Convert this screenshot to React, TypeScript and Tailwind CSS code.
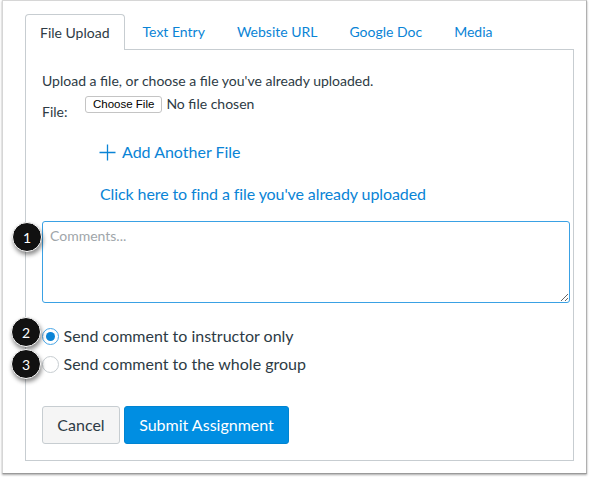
import React from "react";

const Badge = ({ n, className }: { n: string; className: string }) => (
  <div
    className={`absolute w-[30px] h-[30px] rounded-full bg-[#111] border border-white flex items-center justify-center text-white text-[14px] shadow-[1px_3px_4px_rgba(0,0,0,0.45)] ${className}`}
  >
    {n}
  </div>
);

export default function App() {
  const tabs = ["Text Entry", "Website URL", "Google Doc", "Media"];
  return (
    <div className="w-[589px] h-[477px] bg-white relative font-['Lato','Noto_Sans',sans-serif] text-[#2d3b45]">
      <div className="ml-[2px] w-[585px] h-[474px] bg-white border border-[#d6d6d6] border-b-[#9a9a9a] border-r-[#b0b0b0] shadow-[0_1px_2px_rgba(0,0,0,0.35)] pl-[22px] pr-[12px] pt-[12px]">
        <div className="flex items-end h-[36px]">
          <div className="h-[36px] px-[14px] border border-b-0 border-[#c7cdd1] rounded-t-[4px] bg-white relative z-10 flex items-center text-[14px] text-[#2d3b45] -mb-px pb-[1px]">
            File Upload
          </div>
          <div className="flex items-center h-[36px] text-[14px] text-[#0a84d6] pl-[18px] gap-[32px]">
            {tabs.map((t) => (
              <span key={t}>{t}</span>
            ))}
          </div>
        </div>
        <div className="h-[412px] border border-[#c7cdd1] pl-[16px] pr-[2px] pt-[21px]">
          <div className="text-[14px] leading-[20px]">
            Upload a file, or choose a file you've already uploaded.
          </div>
          <div className="flex items-start mt-[3px] h-[30px]">
            <span className="text-[14px] leading-[20px] mt-[8px] w-[43px]">File:</span>
            <div className="flex items-center">
              <span className="h-[17px] px-[7px] border border-[#c4c4c4] rounded-[3px] bg-white text-[11.5px] leading-[15px] text-black font-['Liberation_Sans',Arial,sans-serif] flex items-center">
                Choose File
              </span>
              <span className="ml-[4px] text-[14px] leading-[20px] text-[#2d3b45]">No file chosen</span>
            </div>
          </div>
          <div className="ml-[57px] mt-[16px] flex items-center text-[16px] leading-[24px] text-[#0a84d6]">
            <svg width="17" height="17" viewBox="0 0 17 17" className="mr-[6px]">
              <path d="M8.5 0.5v16M0.5 8.5h16" stroke="#0a84d6" strokeWidth="1.3" fill="none" />
            </svg>
            Add Another File
          </div>
          <div className="ml-[58px] mt-[18px] text-[16px] leading-[24px] text-[#0a84d6] tracking-[-0.1px]">
            Click here to find a file you've already uploaded
          </div>
          <textarea
            className="block mt-[15px] w-[528px] h-[82px] border border-[#3aa1e4] rounded-[3px] px-[7px] py-[3px] text-[14px] outline-none placeholder:text-[#a0a6aa] resize"
            placeholder="Comments..."
          />
          <div className="mt-[23px] flex flex-col gap-[8px] text-[16px] leading-[20px]">
            <label className="flex items-center">
              <span className="w-[17px] h-[17px] rounded-full border border-[#4aa6e6] bg-white flex items-center justify-center mr-[5px] ml-[-0.5px]">
                <span className="w-[9px] h-[9px] rounded-full bg-[#0a84d6]" />
              </span>
              Send comment to instructor only
            </label>
            <label className="flex items-center">
              <span className="w-[17px] h-[17px] rounded-full border border-[#c7cdd1] bg-white mr-[5px] ml-[-0.5px]" />
              Send comment to the whole group
            </label>
          </div>
          <div className="mt-[32px] flex gap-[4px]">
            <button className="h-[38px] w-[78px] bg-[#f5f5f5] border border-[#c7cdd1] rounded-[3px] text-[16px] text-[#2d3b45]">
              Cancel
            </button>
            <button className="h-[38px] w-[165px] bg-[#008ee2] border border-[#0084d1] rounded-[3px] text-[16px] text-white">
              Submit Assignment
            </button>
          </div>
        </div>
      </div>
      <Badge n="1" className="left-[12px] top-[222px]" />
      <Badge n="2" className="left-[11px] top-[317px]" />
      <Badge n="3" className="left-[11px] top-[349px]" />
    </div>
  );
}
